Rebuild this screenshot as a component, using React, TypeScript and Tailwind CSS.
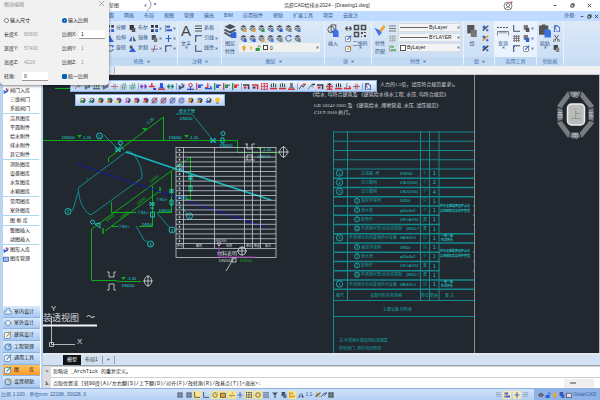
import { useState, type ReactNode } from "react";

type GlyphProps = { kind: string; a?: string; b?: string; className?: string };

const INK = "#4a5058";
const BLUE = "#2f62d8";

// small two-tone glyphs on a 10x10 grid
function Glyph({ kind, a = INK, b = BLUE, className = "size-2" }: GlyphProps) {
  const shapes: Record<string, ReactNode> = {
    layer: (
      <>
        <path d="M5 0 9 2 5 4 1 2Z" fill={a} />
        <path d="M1 4 5 6 9 4M1 6 5 8.500 9 6" stroke={a} strokeWidth="1.300" fill="none" />
        <rect x="5.500" y="6" width="4" height="4" fill={b} />
      </>
    ),
    copy: (
      <>
        <rect x="1" y="0" width="6" height="7" fill={a} />
        <rect x="4" y="4" width="5" height="6" fill={b} />
      </>
    ),
    mirror: (
      <>
        <path d="M4 1V9H0Z" fill={b} />
        <path d="M6 1V9H10Z" fill={a} />
      </>
    ),
    array: (
      <>
        <path d="M0 0H4V4H0ZM6 0H10V4H6ZM0 6H4V10H0Z" fill={a} />
        <path d="M6 6H10V10H6Z" fill={b} />
      </>
    ),
    align: (
      <>
        <path d="M0 0V10" stroke={a} strokeWidth="1.500" />
        <path d="M2 1H7V4H2ZM2 6H10V9H2Z" fill={b} />
      </>
    ),
    rotate: (
      <>
        <path d="M8 2A4 4 0 1 0 9 6" stroke={a} strokeWidth="1.400" fill="none" />
        <path d="M6 0 10 1 8 4Z" fill={b} />
      </>
    ),
    stretch: (
      <>
        <path d="M1 1H5V5H1Z" fill={a} />
        <path d="M0 10 5 3 10 10Z" fill={b} />
      </>
    ),
    corner: (
      <>
        <path d="M1 10V3Q1 1 3 1H10" stroke={a} strokeWidth="1.600" fill="none" />
        <circle cx="1.500" cy="1.500" r="1.500" fill={b} />
      </>
    ),
    trim: (
      <>
        <path d="M0 6H10" stroke={a} strokeWidth="1" />
        <path d="M3 10 6 0" stroke={b} strokeWidth="1.200" />
      </>
    ),
    arrows: <path d="M0 5 3 2V8ZM10 5 7 2V8ZM2 5H8" fill={a} stroke={a} />,
    plus: <path d="M5 0V10M1 5H9" stroke={b} strokeWidth="1.600" />,
    cross: (
      <>
        <path d="M0 5H10" stroke={a} strokeWidth="1.400" />
        <path d="M4 1V9M6 1V9" stroke={b} strokeWidth="1" />
      </>
    ),
    slash: (
      <>
        <path d="M0 4H10M0 7H10" stroke={a} />
        <path d="M3 10 5 0M6 10 8 0" stroke={b} />
      </>
    ),
    tee: (
      <>
        <path d="M4 0V6M0 5H8" stroke={a} strokeWidth="2" />
        <path d="M6 7H10V10H6Z" fill={b} />
      </>
    ),
    person: (
      <>
        <path d="M3 0H7V5L9 8H1L3 5Z" fill={b} />
        <path d="M0 9H10" stroke={a} strokeWidth="2" />
      </>
    ),
    stand: (
      <>
        <circle cx="5" cy="3" r="2.500" fill="none" stroke={a} strokeWidth="1.400" />
        <path d="M5 5V9M0 9H10" stroke={b} strokeWidth="1.800" />
      </>
    ),
    flag: (
      <>
        <path d="M1 0V10" stroke={a} strokeWidth="1.800" />
        <path d="M3 2H10V4H7V7H3Z" fill={b} />
      </>
    ),
    boat: (
      <>
        <path d="M4 0V6L0 7" stroke={b} strokeWidth="1.600" fill="none" />
        <path d="M0 8H10L7 4" stroke={a} strokeWidth="1.600" fill="none" />
      </>
    ),
    hook: (
      <>
        <path d="M0 3H8V9" stroke={a} strokeWidth="2.200" fill="none" />
        <path d="M1 5H5V8H1Z" fill={b} />
      </>
    ),
    dots: <path d="M1 0V10M5 0V10M9 0V10M0 1H10M0 5H10M0 9H10" stroke={a} strokeWidth="1.500" strokeDasharray="2 1" />,
    bars: (
      <>
        <path d="M2 1V6M5 0V6M8 1V6" stroke={b} strokeWidth="1.500" />
        <path d="M0 8H10" stroke={a} strokeWidth="2.200" />
      </>
    ),
    zig: (
      <>
        <path d="M0 9 4 3 6 6 9 1" stroke={b} strokeWidth="1.300" fill="none" />
        <path d="M5 2H10" stroke={a} strokeWidth="1.800" />
      </>
    ),
    stack: (
      <>
        <path d="M2 2H8M5 0V9" stroke={b} strokeWidth="1.800" />
        <path d="M0 5H10M1 9H9" stroke={a} strokeWidth="2" />
      </>
    ),
    brush: (
      <>
        <path d="M2 3Q5 -1 9 3Q10 6 7 9L4 7Z" fill="#3c485c" />
        <circle cx="5" cy="3.500" r="1.800" fill={b} />
        <path d="M5 5 2 8" stroke={a} strokeWidth="3" />
      </>
    ),
    strike: (
      <>
        <circle cx="5" cy="5" r="3.800" fill="#a9b4da" stroke="#4c5f9d" />
        <path d="M1 9 9 1" stroke={a} strokeWidth="1.600" />
      </>
    ),
    valve: (
      <>
        <path d="M1 3 5 5.500 9 1V6L5 8 1 10Z" fill={a} />
        <circle cx="6" cy="2" r="1.600" fill={b} />
      </>
    ),
    bulb: (
      <>
        <circle cx="5" cy="4" r="3.300" fill={b} />
        <path d="M3.500 7H6.500V10H3.500Z" fill={a} />
      </>
    ),
    lines: <path d="M0 1.500H10M0 5H10M0 8.500H10" stroke={a} strokeWidth="1.500" />,
    grid: <path d="M2 0V10M5 0V10M8 0V10M0 2H10M0 5H10M0 8H10" stroke={a} strokeWidth="1.100" />,
    ell: <path d="M1 0V9H10" stroke={a} strokeWidth="1.500" fill="none" />,
    check: (
      <>
        <path d="M1 1H5V5H1ZM6 6H9V9H6Z" fill={b} />
        <path d="M1 8 9 1" stroke={a} strokeWidth="2" />
      </>
    ),
    cut: (
      <>
        <path d="M2 0 7 7M8 0 3 7" stroke={a} strokeWidth="1.300" />
        <circle cx="2" cy="8" r="1.400" fill="none" stroke={a} />
        <circle cx="8" cy="8" r="1.400" fill="none" stroke={a} />
      </>
    ),
    ring: (
      <>
        <circle cx="5" cy="5" r="3.800" fill="none" stroke={a} strokeWidth="1.300" />
        <path d="M5 5 9 1" stroke={b} strokeWidth="1.500" />
      </>
    ),
    square: <rect x="1" y="2" width="8" height="7" fill={b} stroke={a} strokeWidth="1.300" />,
    funnel: <path d="M0 1H10L6 5V10H4V5Z" fill={a} />,
    clip: (
      <>
        <path d="M2 1H7V3H9V10H2Z" fill="#fff" stroke={b} strokeWidth="1.400" />
        <path d="M4 0V6L7 9" stroke={a} strokeWidth="1.200" fill="none" />
      </>
    ),
    lock: (
      <>
        <rect x="1" y="5" width="7" height="5" fill={b} />
        <path d="M5 5V2Q7 0 9 2V4" stroke={b} strokeWidth="1.300" fill="none" />
      </>
    ),
    house: <path d="M1 9V5H3V2H7V5H9V9Z" fill={b} stroke={a} strokeWidth="0.900" />,
    gate: (
      <>
        <circle cx="5" cy="5" r="3" fill={b} stroke={a} />
        <path d="M0 5H2M8 5H10" stroke={a} />
      </>
    ),
    pencil: (
      <>
        <rect x="0.500" y="2" width="7.500" height="7.500" rx="2" fill="#fff" stroke={a} />
        <path d="M3 7 9 1" stroke={b} strokeWidth="1.600" />
      </>
    ),
  };
  return (
    <svg viewBox="0 0 10 10" className={`shrink-0 ${className}`} aria-hidden="true">
      {shapes[kind]}
    </svg>
  );
}

function Caret() {
  return <span className="h-px w-px shrink-0 bg-[#5b7494] ring-1 ring-[#5b7494]/30" />;
}

function Panel({ title, className, more, children }: { title: string; className: string; more?: boolean; children: ReactNode }) {
  return (
    <section className={`flex h-11 shrink-0 flex-col border-r border-[#e9f2fc] ${className}`}>
      <div className="flex min-h-0 flex-1 items-start pt-0.5">{children}</div>
      <h2 className="flex h-2 items-center justify-center gap-1 bg-[#c1d9f3] text-[5px] leading-[8px] text-[#3e6aaa]">
        {title}
        {more && <Caret />}
      </h2>
    </section>
  );
}

function SmallTool({ kind, label, a, b, caret }: { kind: string; label?: string; a?: string; b?: string; caret?: boolean }) {
  return (
    <button className="flex h-2.5 items-center gap-0.5 whitespace-nowrap text-[5px]">
      <Glyph kind={kind} a={a} b={b} className="size-[7px]" />
      {label}
      {caret && <Caret />}
    </button>
  );
}

function BigTool({ icon, lines, caret }: { icon: ReactNode; lines: string[]; caret?: boolean }) {
  return (
    <button className="flex w-4 shrink-0 flex-col items-center text-[5px] leading-[8px] whitespace-nowrap">
      <span className="flex h-4 items-center">{icon}</span>
      {lines.map((l) => (
        <span key={l}>{l}</span>
      ))}
      {caret && <Caret />}
    </button>
  );
}

function PropSelect({ label, value, line }: { label: string; value: string; line: boolean }) {
  return (
    <label className="flex h-[9px] items-center gap-px border border-[#d5dde6] bg-[#f4f4f4] px-px">
      {line ? <span className="h-px w-7 bg-[#666]" /> : <span className="size-[6px] border border-[#555] bg-white" />}
      <select aria-label={label} className="min-w-0 flex-1 appearance-none bg-transparent text-[5px] leading-[7px] text-[#222]">
        <option>{value}</option>
      </select>
      <Caret />
    </label>
  );
}

const menus = ["曲面", "网格", "布局", "视图", "管理", "输出", "BIM", "应用软件", "帮助", "扩展工具", "项目", "云批注"];

function TitleBar() {
  return (
    <header className="relative flex h-[11px] shrink-0 items-center bg-white pl-[109px] text-[5px] text-[#333]">
      <span className="w-9">草图</span>
      <Caret />
      <svg viewBox="0 0 12 11" className="h-[11px] w-3" aria-hidden="true">
        <path d="M3 0Q8 5 1 11" stroke="#9a9a9a" fill="none" />
        <circle cx="9" cy="4" r="1" fill="#4a68b0" />
      </svg>
      <h1 className="flex-1 pl-[126px]">浩辰CAD给排水2024 - [Drawing1.dwg]</h1>
      <svg viewBox="0 0 10 10" className="mr-10 size-2.5" aria-hidden="true">
        <circle cx="5" cy="5" r="4" fill="none" stroke="#666" strokeWidth="0.800" />
        <circle cx="5" cy="4" r="1.600" fill="none" stroke="#666" strokeWidth="0.800" />
        <path d="M2 8Q5 4 8 8" fill="none" stroke="#666" strokeWidth="0.800" />
        <circle cx="8.500" cy="1.500" r="1" fill="#e33" />
      </svg>
      <WindowButtons className="gap-3 pr-2" />
    </header>
  );
}

function WindowButtons({ className }: { className: string }) {
  return (
    <div className={`flex items-center text-[#333] ${className}`}>
      {["M1 3H4", "M1 2H4V5H1ZM2 2V1H5V4H4", "M1 1 5 5M5 1 1 5"].map((d, i) => (
        <button key={d} aria-label={["最小化", "还原", "关闭"][i]}>
          <svg viewBox="0 0 6 6" className="size-[5px]">
            <path d={d} stroke="currentColor" fill="none" />
          </svg>
        </button>
      ))}
    </div>
  );
}

function Ribbon() {
  return (
    <div className="flex h-[45px] shrink-0 bg-gradient-to-b from-[#dce9f8] to-[#c7dcf3] pl-[105px] text-[#2d4f80]">
      <Panel title="修改" more className="w-[73px]">
        <div className="grid grid-cols-[22px_22px_14px_12px] pl-[2px]">
          <SmallTool kind="array" label="分解" />
          <SmallTool kind="copy" label="布尔" a="#333" b="#555" />
          <SmallTool kind="array" caret a="#333" />
          <SmallTool kind="align" caret />
          <SmallTool kind="stretch" label="拉伸" />
          <SmallTool kind="mirror" label="镜像" />
          <SmallTool kind="copy" caret b="#777" />
          <SmallTool kind="plus" caret />
          <SmallTool kind="rotate" label="旋转" />
          <SmallTool kind="stretch" label="复制" />
          <SmallTool kind="trim" caret b="#b04040" />
          <SmallTool kind="corner" caret />
        </div>
      </Panel>
      <Panel title="注释" more className="w-[44px]">
        <BigTool icon={<span className="font-['Liberation_Sans'] text-[15px] leading-4 text-[#444]">A</span>} lines={["文字"]} caret />
        <div className="flex flex-col pl-px">
          <SmallTool kind="lines" label="表格" />
          <SmallTool kind="corner" label="引线" caret />
          <SmallTool kind="ell" label="线性" caret />
        </div>
      </Panel>
      <Panel title="图层" more className="w-[103px]">
        <BigTool icon={<Glyph kind="layer" className="size-3.5" />} lines={["图层", "特性"]} />
        <div className="flex min-w-0 flex-1 flex-col pr-1 pl-px">
          <div className="grid w-[64px] grid-cols-7 pl-px">
            {["#e8a33a", "#e8a33a", "#35a04a", "#4a86d8", BLUE, "#888", "#4a86d8", BLUE, BLUE, "#e8a33a", "#4a86d8", "#888", BLUE, "#777"].map((c, i) => (
              <SmallTool key={i} kind={i === 12 ? "rotate" : "layer"} a="#555" b={c} />
            ))}
          </div>
          <label className="flex h-[9px] items-center gap-0.5 bg-[#f0f0ee] px-0.5">
            <Glyph kind="bulb" a="#e89a20" b="#f0ad3c" className="size-1.5" />
            <Glyph kind="bulb" a="#f0b040" b="#f3bb52" className="size-1" />
            <Glyph kind="lock" b="#2c9b3c" className="size-1.5" />
            <span className="size-[5px] border border-[#444] bg-white" />
            <select aria-label="图层" className="min-w-0 flex-1 appearance-none bg-transparent text-[5px] leading-[8px] text-[#222]">
              <option>0</option>
            </select>
            <Caret />
          </label>
        </div>
      </Panel>
      <Panel title="块" more className="w-[47px]">
        <BigTool
          icon={
            <svg viewBox="0 0 12 15" className="h-3.5 w-3" aria-hidden="true">
              <rect x="4" y="1" width="5" height="7" fill="none" stroke="#555" />
              <circle cx="4" cy="6" r="3.500" fill="none" stroke="#555" />
              <path d="M6 6H10L12 8V14H6Z" fill="#3a70e8" />
            </svg>
          }
          lines={["插入"]}
        />
        <div className="flex flex-col pl-1">
          <SmallTool kind="arrows" />
          <SmallTool kind="pencil" />
          <SmallTool kind="pencil" b="#e89a20" />
        </div>
        <BigTool
          icon={
            <svg viewBox="0 0 14 14" className="size-3.5" aria-hidden="true">
              <path d="M1.500 1.500H5.500V5.500H1.500ZM8.500 1.500H12.500V5.500H8.500ZM1.500 8.500H5.500V12.500H1.500Z" fill="none" stroke="#4d4d4d" strokeWidth="1.500" />
              <path d="M8 8H10V10H8ZM11 11H13V13H11ZM11 8H13V9H11ZM8 12H9V13H8Z" fill="#4d4d4d" />
            </svg>
          }
          lines={["二维码"]}
          caret
        />
      </Panel>
      <Panel title="特性" more className="w-[92px]">
        <BigTool
          icon={
            <svg viewBox="0 0 12 13" className="size-3" aria-hidden="true">
              <path d="M5 6 10 0 12 2 7 8Z" fill="#f0a030" />
              <path d="M0 3 4 5 8 8 5 12Z" fill="#3a70e8" />
            </svg>
          }
          lines={["特性", "匹配"]}
        />
        <div className="flex flex-col pl-px">
          <SmallTool kind="lines" a="#777" />
          <SmallTool kind="grid" a="#aaa" />
          <SmallTool kind="align" a="#d55" b="#5fae6a" />
        </div>
        <div className="flex min-w-0 flex-1 flex-col gap-px px-0.5">
          <PropSelect label="线宽" value="ByLayer" line />
          <PropSelect label="线型" value="BYLAYER" line />
          <PropSelect label="颜色" value="ByLayer" line={false} />
        </div>
      </Panel>
      <Panel title="组" more className="w-[31px]">
        <BigTool icon={<Glyph kind="copy" a="#555" b="#777" className="size-3" />} lines={["组"]} />
        <div className="flex flex-col pl-0.5">
          <SmallTool kind="check" a="#555" />
          <SmallTool kind="check" a="#e89a20" />
          <SmallTool kind="check" a="#333" />
        </div>
      </Panel>
      <Panel title="实用工具" className="w-[42px] bg-[#e9f2fd]">
        <BigTool
          icon={
            <svg viewBox="0 0 12 9" className="h-2.5 w-3" aria-hidden="true">
              <path d="M0 1H12" stroke="#555" strokeDasharray="2 1" />
              <path d="M0.500 9V5H11.500V9M3 5V7M5 5V7M7 5V7M9 5V7" fill="none" stroke="#666" strokeWidth="0.800" />
            </svg>
          }
          lines={["查询"]}
          caret
        />
        <div className="grid grid-cols-[10px_12px] pl-0.5">
          <SmallTool kind="ell" />
          <SmallTool kind="copy" a="#777" b="#555" caret />
          <SmallTool kind="grid" a="#666" />
          <SmallTool kind="copy" a="#777" caret />
          <SmallTool kind="corner" />
          <SmallTool kind="pencil" caret />
        </div>
      </Panel>
      <Panel title="剪贴板" className="w-[27px]">
        <BigTool
          icon={
            <svg viewBox="0 0 13 14" className="h-3.5 w-3" aria-hidden="true">
              <path d="M0 1H3V0H7V1H10V11H0Z" fill="#555" />
              <path d="M6 5H11L13 7V14H6Z" fill="#3a70e8" />
            </svg>
          }
          lines={["粘贴"]}
          caret
        />
        <div className="flex flex-col">
          <SmallTool kind="clip" />
          <SmallTool kind="cut" />
          <SmallTool kind="copy" a="#444" b="#888" />
        </div>
      </Panel>
    </div>
  );
}

const sideGroups = [
  ["阀门附件", "阀门入库", "三维阀门", "系统阀门"],
  ["洁具图库", "平面附件", "给水附件", "排水附件", "其它附件"],
  ["消防图库", "设备图库", "水泵图库", "水箱图库"],
  ["常用图库", "室外图库"],
  ["图 框 库"],
  ["整图插入", "动图插入"],
  ["图形入库", "图库管理"],
];

const sideTabs = [
  { label: "室内设计", kind: "house", b: "#dff0f4" },
  { label: "室外设计", kind: "gate", b: "#ffffff" },
  { label: "建筑设计", kind: "pencil", b: "#e08a2c" },
  { label: "工程管理", kind: "ring", b: "#6b8fb5" },
  { label: "通用工具", kind: "pencil", b: "#5a89c0" },
  { label: "图　　库", kind: "pencil", b: "#4d9a8c" },
  { label: "设置帮助", kind: "ring", b: "#e0a040" },
];

function Sidebar() {
  const [active, setActive] = useState("图　　库");
  const icons: Record<string, string> = { 阀门入库: "valve", 图形入库: "valve", 图库管理: "square" };
  return (
    <aside className="flex w-[43px] shrink-0 flex-col border-r-2 border-l-3 border-[#b9d3f1] bg-white text-[5px] text-[#222]">
      <nav className="flex-1 overflow-hidden pt-[2px]">
        {sideGroups.map((group, i) => (
          <ul key={i} className={i ? "mr-0.5 border-t border-[#a9d8f0]" : "mr-0.5"}>
            {group.map((name) => (
              <li key={name}>
                <button className="flex h-[9px] items-center whitespace-nowrap">
                  <span className="w-[7px]">
                    {icons[name] && <Glyph kind={icons[name]} a="#3560c0" b={name === "图库管理" ? "#9bc0ee" : "#c0306a"} className="size-1.5" />}
                  </span>
                  {name}
                </button>
              </li>
            ))}
          </ul>
        ))}
      </nav>
      <div className="flex h-[82px] flex-col pr-px">
        {sideTabs.map((t) => (
          <button
            key={t.label}
            onClick={() => setActive(t.label)}
            className={`flex flex-1 items-center gap-0.5 border-b border-[#90b4e0] pl-px whitespace-nowrap ${
              active === t.label ? "bg-gradient-to-b from-[#ffc25c] to-[#ff9a28]" : "bg-gradient-to-b from-[#d9eafc] to-[#a8c9f1]"
            }`}
          >
            <Glyph kind={t.kind} a="#4f7fa8" b={t.b} />
            {t.label}
          </button>
        ))}
      </div>
    </aside>
  );
}

type Tool = [kind: string, a: string, b: string];

const R = "#dc3038";
const K = "#3c3c44";
const pipeTools: Tool[][] = [
  [
    ["zig", "#999", "#888"],
    ["valve", "#6a7a98", "#2d9a3a"],
    ["bars", "#667", "#3a9a50"],
    ["valve", "#667088", "#8890b0"],
    ["cross", "#e06060", "#888"],
    ["slash", "#999", "#3a9a60"],
    ["slash", "#4aa070", "#4aa070"],
  ],
  [
    ["arrows", "#8040b0", K],
    ["tee", R, "#3040d0"],
    ["person", R, "#2850e0"],
    ["arrows", "#208070", K],
  ],
  [
    ["valve", "#4a5270", "#6a7ab0"],
    ["stand", R, "#3050c0"],
    ["flag", "#e04060", "#3050d0"],
    ["boat", "#3050d0", R],
    ["flag", "#209040", "#3050d0"],
    ["flag", R, "#308848"],
    ["flag", "#209040", R],
  ],
  [
    ["hook", K, R],
    ["hook", R, K],
    ["dots", R, K],
    ["bars", R, "#335533"],
    ["bars", R, "#335533"],
    ["person", R, "#777"],
  ],
  [
    ["zig", R, K],
    ["zig", K, "#777"],
    ["hook", K, R],
    ["stack", R, K],
    ["bars", R, K],
    ["boat", R, "#999"],
    ["cross", "#777", R],
  ],
  [["clip", K, "#3344b0"]],
];

const brushTools: Tool[] = [
  ["brush", "#2ca03a", "#f0f0c0"],
  ["brush", "#209060", "#d8f0e4"],
  ["brush", "#e88020", "#40b050"],
  ["brush", "#e88020", "#40b050"],
  ["brush", "#e8d020", "#d040c0"],
  ["brush", "#e060e0", "#f4d0f0"],
  ["brush", "#e88020", "#d040c0"],
  ["brush", "#e88020", "#d02090"],
  ["strike", R, R],
  ["strike", R, R],
  ["strike", "#6070b0", K],
  ["strike", "#8890d0", K],
  ["brush", "#e89020", "#f0b050"],
  ["brush", "#e89020", "#8898c8"],
  ["brush", "#3858b0", "#fff"],
  ["bulb", "#888", "#f6c52c"],
];

function ToolButton({ tool }: { tool: Tool }) {
  return (
    <button className="flex w-[9px] justify-center">
      <Glyph kind={tool[0]} a={tool[1]} b={tool[2]} className="size-[7px]" />
    </button>
  );
}

const WHITE = "#d8dadc";
const CYAN = "#18c4c4";
const TEAL = "#128a8e";
const GREEN = "#0fae14";

const partRows = [
  { no: "1", name: "过滤器, 阀", spec: "DN200", unit: "个", n: "1" },
  { no: "4", name: "法兰蝶阀", spec: "D7A-S(D600)", unit: "个", n: "2" },
  { no: "3", name: "法兰蝶阀", spec: "D7A-S(D600)", unit: "个", n: "4" },
  { sub: "4", name: "遥控浮球阀", spec: "DN50", unit: "只", n: "1" },
  { sub: "3", name: "泄水管", spec: "φ50x3x2", unit: "个", n: "1" },
  { sub: "2", name: "配管件", spec: "UXP-UA-FS/2", unit: "套", n: "1" },
  { sub: "10", name: "不锈钢水泵/全自动控制", spec: "QN80/2-7", unit: "套", n: "1" },
  { no: "2", name: "不锈钢全自动变频供水设备", spec: "WADE/30-3", unit: "只", n: "1" },
  { sub: "4", name: "遥控浮球阀", spec: "DN50", unit: "只", n: "1" },
  { sub: "3", name: "泄水管", spec: "φ50x3x2", unit: "个", n: "1" },
  { sub: "2", name: "配管件", spec: "UXP-UA-FS/2", unit: "套", n: "1" },
  { sub: "10", name: "不锈钢水泵/全自动控制", spec: "QN80/2-7", unit: "套", n: "1" },
  { no: "1", name: "不锈钢全自动变频供水设备", spec: "WADE/30-3", unit: "只", n: "1" },
];

function PartsSchedule() {
  const pitch = 9.25;
  return (
    <g fontSize="4">
      <g stroke={TEAL} fill="none">
        {Array.from({ length: 18 }, (_, i) => (
          <path key={i} d={`M333 ${132 + i * pitch}H474`} strokeWidth={i > 4 ? 1.5 : 1.2} />
        ))}
        <path d="M333 300.500H474M333 316.500H474M333.500 131V353M347.500 131V300M420.500 131V300M429.500 131V300M439 131V300" />
      </g>
      <rect x="440" y="198" width="33" height="35" fill="#212830" />
      <rect x="440" y="244" width="33" height="35" fill="#212830" />
      {partRows.map((r, i) => {
        const y = 175 + i * pitch;
        const wide = r.name.length > 9;
        return (
          <g key={i} fill={CYAN}>
            {r.no && <circle cx="339.500" cy={y - 2} r="3.200" fill="none" stroke={CYAN} strokeWidth="0.800" />}
            {r.no && <text x="338.500" y={y - 0.5}>{r.no}</text>}
            {r.sub && <circle cx="357" cy={y - 2} r="2.500" fill="none" stroke={CYAN} strokeWidth="0.800" />}
            {r.sub && <text x="357" y={y - 1} fontSize="3" textAnchor="middle">{r.sub}</text>}
            <text x={r.sub || !wide ? 361 : 349} y={y - 0.5} fill="#16a0a2">{r.name}</text>
            <text x={r.sub && wide ? 406 : 400} y={y - 0.5} fontSize={r.spec.length > 7 ? 3 : 4}>{r.spec}</text>
            <text x="423" y={y - 0.5} fill="#16a0a2">{r.unit}</text>
            <text x="433" y={y} fontSize="5">{r.n}</text>
          </g>
        );
      })}
      <g fill="#16a0a2">
        <text x="336" y="296.500">编号</text>
        <text x="370" y="296.500">设备材料名称规格</text>
        <text x="421" y="296.500">单位</text>
        <text x="430" y="296.500">数量</text>
        <text x="445" y="296.500">备 注</text>
        <text x="383" y="310.500">主要设备 材料表</text>
        <text x="339" y="341.500">注:不锈钢水箱选用标准图集</text>
        <text x="339" y="349.500">所有阀门, 管件均同管径</text>
      </g>
      <g fill="#20e8e8" fontSize="3">
        <text x="440" y="207">供水设备配套组件含水</text>
        <text x="440" y="212">泵控制柜及各附件管道</text>
        <text x="441" y="237">一用一备</text>
        <text x="441" y="241">生活供水</text>
        <text x="440" y="252">供水设备配套组件含水</text>
        <text x="440" y="257">泵控制柜及各附件管道</text>
        <text x="441" y="283">一用一备</text>
        <text x="441" y="287">生活供水</text>
      </g>
    </g>
  );
}

function Drawing() {
  return (
    <svg
      viewBox="43 75 557 279"
      className="absolute top-0 left-0 h-[279px] w-[557px] font-['Liberation_Sans','Noto_Sans_CJK_SC',sans-serif]"
      role="img"
      aria-label="给排水系统透视图"
    >
      {/* title block frame */}
      <path d="M474.500 75V354" stroke="#8a8f94" />

      {/* storage tank */}
      <g fill="none" stroke={TEAL} strokeWidth="1">
        <path d="M78 188 126 152Q131 150 135 156Q143 168 142 178L91 215Q84 212 80 200Z" />
        <path d="M104 135 118 149M71 210H73L78 192M136 226 144 240 148 242M157 213 170 228M176 200 187 214" />
        <path d="M176 114H192L212 139" />
      </g>

      {/* pipe runs */}
      <g fill="none" stroke={GREEN} strokeWidth="1">
        <path d="M55 88.500H70M43 140.500H237.500V152.500H279" />
        <path d="M108.500 162V158L163.500 117V140" />
        <path d="M91.500 280V229L190.500 157V199.500H181" />
        <path d="M91.500 280.500H115L120 281.500H141" />
        <path d="M105 231 161 190M111.500 202V212.500H136M157 212.500H171.500V172M112 226.500H118M139 226.500H152.500V186" />
        <path d="M103 228V234M160 187V193" strokeWidth="1.500" />
      </g>
      <path d="M126 152 170 167 271 200" stroke="#14b8be" strokeWidth="1.600" fill="none" />
      <path d="M77 164 170 195 265 227" stroke="#1a1a98" strokeWidth="1.300" fill="none" />

      {/* valves */}
      <g fill="none" stroke="#20dede" strokeWidth="0.800">
        <path d="M116 147V152L120 147V152ZM119 144 124 150M211 138V143L215 138V143ZM221 138V143H224V138ZM150 202V206L154 202V206ZM150.500 212H154.500V217H150.500ZM150 208H154M189 175V180L192 175V180ZM189 186H192V191H189ZM170 189V193L173 189V193ZM170 200H173V205H170ZM177 165H182V170ZM95 224 100 228V223Z" />
        <circle cx="120.500" cy="143" r="2" />
        <circle cx="223" cy="133.500" r="2" />
        <circle cx="92.500" cy="222" r="2" />
        <circle cx="99.500" cy="136" r="3" />
        <circle cx="68" cy="211.500" r="3" />
        <circle cx="150.500" cy="244" r="3" />
        <circle cx="172" cy="230" r="3" />
        <circle cx="189.500" cy="216" r="3" />
      </g>
      <g fill="#20dede" fontSize="4">
        <text x="98.500" y="137.500">5</text>
        <text x="67" y="213">2</text>
        <text x="149.500" y="245.500">3</text>
        <text x="171" y="231.500">4</text>
        <text x="188.500" y="217.500">1</text>
        <text x="62" y="138.500">DN200</text>
        <text x="82" y="138.500">-1.20</text>
        <text x="147" y="125" transform="rotate(-36 147 125)">-1.20</text>
        <text x="169" y="138.500">DN200</text>
        <text x="189" y="138.500">-1.20</text>
        <text x="179" y="113">给水干管</text>
        <text x="180" y="120">DN200</text>
        <text x="220" y="147">DN200</text>
        <text x="262" y="150.500">-1.00</text>
        <text x="258" y="157.500">DN100</text>
        <text x="127" y="279.500">-1.00</text>
        <text x="122" y="286.500">DN100</text>
        <text x="137" y="214">①S1×</text>
        <text x="118" y="228">①S1×</text>
        <text x="156" y="200.500">①S1×</text>
        <text x="142" y="225.500">DN50</text>
        <text x="159" y="211.500">DN100</text>
        <text x="178" y="198.500">DN50</text>
      </g>
      <g fill={GREEN} fontSize="4">
        <path d="M77 135H82L79.500 138ZM184 135H189L186.500 138ZM257 147H262L259.500 150ZM121 277H126L123.500 280ZM142 128H147L145 131Z" />
        <text x="151" y="183" transform="rotate(-36 151 183)">DN80</text>
        <text x="138" y="205" transform="rotate(-36 138 205)">DN80</text>
        <text x="121" y="219" transform="rotate(-36 121 219)">DN80</text>
        <text x="107" y="222" transform="rotate(-36 107 222)">DN80</text>
        <text x="86" y="181">T</text>
        <text x="240" y="262">DN100</text>
      </g>

      {/* blank materials table */}
      <g stroke="#c4c8cc" fill="none" strokeWidth="0.800">
        <rect x="176" y="147.500" width="100" height="110" />
        {Array.from({ length: 20 }, (_, i) => (
          <path key={i} d={`M176 ${152.3 + i * 4.8}H276`} />
        ))}
        <path d="M176 248.500H276M183.500 147V248M214.500 147V248M244.500 147V248M252.500 147V248M260.500 147V248" />
        <path d="M179.500 149V242" strokeWidth="1.500" strokeDasharray="2 2.800" />
      </g>
      <g fill={WHITE} fontSize="3">
        <text x="177" y="247">序号</text>
        <text x="196" y="247">图例</text>
        <text x="226" y="247">名称</text>
        <text x="246" y="247">单位</text>
        <text x="254" y="247">数量</text>
        <text x="265" y="247">备注</text>
        <text x="214" y="242" fontSize="4">DN100</text>
        <text x="217" y="255" fontSize="5">材料表明</text>
        <text x="219" y="262" fontSize="4">DN100</text>
      </g>
      <path d="M219 243V257H255" stroke="#a030b0" fill="none" />

      {/* breaks, flow marks and the ucs icon */}
      <g fill="none" stroke={WHITE} strokeWidth="0.800">
        <path d="M245 144H248M252 144H255M247 144V149H252V144M247 160V155H252V160M245 160H255M107 272H109V277H114V272H116M107 290H109V284H114V290H116M234 258 226 271M232 262H236V258H232ZM217 243H221L219 246Z" />
        <ellipse cx="283.500" cy="152" rx="3.800" ry="4.800" />
        <path d="M283.500 146V158M278 152H289" />
        <ellipse cx="148" cy="281" rx="3.500" ry="4.500" />
        <path d="M148 275V287M143 281H153" />
        <circle cx="242" cy="251" r="4" />
        <path d="M242 246V256M237 251H247" />
        <path d="M51.500 316V344.500H75M49.500 342.500H53.500V346.500H49.500Z" />
      </g>
      <path d="M43 325.500H97" stroke="#f4f4f4" strokeWidth="1.800" />
      <g fill={WHITE}>
        <text x="51" y="311" fontSize="8">Y</text>
        <text x="77" y="344" fontSize="8">X</text>
        <text x="43" y="321" fontSize="9">装透视图</text>
        <text x="86" y="320" fontSize="9">～</text>
      </g>
      <g fill={WHITE} fontSize="5" fontFamily="Liberation Serif, Noto Sans CJK SC, serif">
        <text x="380" y="86">人力的1.5倍，试压符合规范要求)。</text>
        <text x="310" y="96">《给水, 均符合建筑及 《建筑给水排水工程, 水压, 均符合规范》</text>
        <text x="314" y="106.500">GB 50242-2002 及 《建筑给水 ,埋地管道, 水压, 试压规范》</text>
        <text x="314" y="114">CJJ/T-2010 执行。</text>
      </g>
      <PartsSchedule />
    </svg>
  );
}

function Compass() {
  return (
    <svg viewBox="0 0 40 52" className="absolute top-[14px] right-[3px] h-[52px] w-10" aria-label="视图方位" role="img">
      <path d="M13 5H25L35 17V34L25 46H13L4 34V17Z" fill="none" stroke="#777b80" strokeWidth="5" />
      <path d="M12 0 15 9M26 0 23 9M0 18 8 20M40 18 31 20M0 33 8 31M40 33 31 31M12 52 15 43M26 52 23 43" stroke="#20272f" strokeWidth="1" />
      <rect x="11.500" y="15" width="17" height="21" rx="4" fill="#b9bcba" stroke="#eceeed" strokeWidth="1.500" />
      <g fill="#c4c7ca" fontSize="6" textAnchor="middle" fontFamily="Noto Sans CJK SC, sans-serif">
        <text x="19" y="8">北</text>
        <text x="19" y="49">南</text>
        <text x="4" y="28">西</text>
        <text x="35" y="28">东</text>
        <text x="20" y="30" fontSize="11" fill="#8d918f">上</text>
      </g>
    </svg>
  );
}

function Workspace() {
  return (
    <div className="relative min-h-0 flex-1 overflow-hidden border-r border-[#b0b8c0] bg-[#212830]">
      <Drawing />
      <Compass />
      <div className="absolute top-[5px] left-[27px] flex h-3 items-center gap-0.5 border border-[#8fb2e6] bg-gradient-to-b from-[#f2f7fe] to-[#b9d2f6] pr-1 pl-[3px]">
        {pipeTools.map((group, i) => (
          <div key={i} className={i ? "-ml-px flex border-l border-[#8ea9d4]" : "flex"}>
            {group.map((t, j) => (
              <ToolButton key={j} tool={t} />
            ))}
          </div>
        ))}
      </div>
      <div className="absolute top-[19px] left-8 flex h-3 items-center border border-[#8fb2e6] bg-gradient-to-b from-[#f2f7fe] to-[#b9d2f6] px-[2px]">
        {brushTools.map((t, i) => (
          <ToolButton key={i} tool={t} />
        ))}
      </div>
    </div>
  );
}

function CommandArea() {
  return (
    <>
      <div className="flex h-[13px] shrink-0 items-center border-t-2 border-b border-t-[#e4e8ec] border-b-[#9aa4b0] bg-[#d3e2f2] pl-5 text-[5px]">
        <button className="bg-[#101418] px-1 py-px text-white">模型</button>
        <button className="px-1 text-[#333]">布局1</button>
        <button className="border-x border-[#90a0b4] px-1 text-[#333]">+</button>
      </div>
      <div className="flex h-[22px] shrink-0 bg-[#d0d0d0] text-[5px] text-[#222]">
        <div className="flex w-2 flex-col items-center justify-around bg-[#dcdcdc]">
          <button aria-label="关闭命令行" className="leading-none text-[#555]">×</button>
          <Glyph kind="stretch" a="#777" b="#777" className="size-1" />
        </div>
        <div className="flex min-w-0 flex-1 flex-col gap-px pt-px font-['Liberation_Mono','Noto_Sans_CJK_SC',monospace]">
          <p className="flex-1 bg-white pl-0.5 leading-[10px]">忽略块 _ArchTick 的重复定义。</p>
          <div className="flex h-[10px] items-center bg-white">
            <input
              aria-label="命令行"
              className="h-[9px] min-w-0 flex-1 pl-0.5 outline-none"
              defaultValue="点取位置或 [转90度(A)/左右翻(S)/上下翻(D)/对齐(F)/改转角(R)/改基点(T)]<退出>:"
            />
            <span className="mr-1.5 flex h-[9px] w-[30px] items-center bg-[#efefef] pl-1.5">
              <span className="h-0.5 w-1.5 bg-[#999]" />
            </span>
          </div>
        </div>
      </div>
    </>
  );
}

const statusTools: { kind: string; on?: boolean }[] = [
  { kind: "grid" }, { kind: "grid" }, { kind: "ell", on: true }, { kind: "ell" }, { kind: "ring", on: true },
  { kind: "square", on: true }, { kind: "trim", on: true }, { kind: "plus" }, { kind: "dots", on: true }, { kind: "ring", on: true },
  { kind: "lines" }, { kind: "funnel" }, { kind: "copy" }, { kind: "align", on: true }, { kind: "mirror" },
];

function StatusBar() {
  return (
    <footer className="flex h-3 shrink-0 items-center border-t border-[#8fb0dc] bg-gradient-to-b from-[#cfe2fa] to-[#b4d0f3] text-[5px] text-[#3060a0]">
      <span className="w-[50px] pl-px whitespace-nowrap">比例 1:100 · 单位mm</span>
      <span className="w-[126px] whitespace-nowrap">22198, 30028, 0</span>
      <div className="flex w-[158px] items-center justify-between">
        {statusTools.map((t, i) => (
          <button key={i} className={t.on ? "rounded-[1px] bg-[#fbe48a] p-px" : "p-px"}>
            <Glyph kind={t.kind} a="#44506a" b={t.on ? "#e0a428" : "#5a6a88"} className="size-1.5" />
          </button>
        ))}
        <button>1:1·</button>
        <Glyph kind="check" a="#44506a" b="#e8b040" className="size-1.5" />
        <Glyph kind="zig" a="#44506a" b="#44506a" className="size-1.5" />
        <Glyph kind="grid" a="#333" className="size-1.5" />
      </div>
      <div className="ml-auto flex items-center gap-0.5 pr-1.5">
        <Glyph kind="lines" a="#8a9ab4" className="size-[5px]" />
        <span className="rounded-[1px] bg-[#fbe9a8] p-px"><Glyph kind="align" a="#d04040" className="size-1.5" /></span>
        <span className="rounded-[1px] bg-[#fbe9a8] p-px"><Glyph kind="plus" className="size-1.5" /></span>
        <Glyph kind="lines" a="#8a9ab4" className="size-[5px]" />
      </div>
      <div className="flex h-full shrink-0 items-center gap-px bg-[#8fb3e6] px-1">
        <Glyph kind="gate" a="#333" b="#777" className="size-1.5" />
        <Glyph kind="lock" className="size-1.5" />
        <Glyph kind="bulb" a="#e89a20" b="#f0a830" className="size-1.5" />
        <Glyph kind="copy" a="#3858b0" className="size-1.5" />
        <Glyph kind="square" a="#555" b="#dde" className="size-1.5" />
        <span>GstarCAD</span>
      </div>
    </footer>
  );
}

const axes = [
  { size: "长度X:", value: "80600", ratio: "比例X:" },
  { size: "宽度Y:", value: "57400", ratio: "比例Y:" },
  { size: "高度Z:", value: "4219", ratio: "比例Z:" },
];

const fieldClass = "h-[9px] w-full min-w-0 px-0.5 outline-none";

function BlockDialog() {
  const [mode, setMode] = useState("ratio");
  const [uniform, setUniform] = useState(true);
  return (
    <form className="absolute top-0 left-0 w-[109px] rounded-b-[4px] bg-[#f1f1f1] px-1 pb-1 text-[5px] leading-[9px] text-[#222] shadow-[0_1px_3px_rgba(0,0,0,0.500)]">
      <div className="flex h-4 items-start justify-between text-[#8a8a8a]">
        <span>图块编辑</span>
        <button type="button" aria-label="关闭" className="pr-px">
          <svg viewBox="0 0 5 5" className="mt-px size-[5px]">
            <path d="M0 0 5 5M5 0 0 5" stroke="#888" strokeWidth="0.700" />
          </svg>
        </button>
      </div>
      <div className="grid grid-cols-[18px_26px_14px_17px_26px] items-center gap-y-[5px]">
        <label className="col-span-3 flex items-center gap-px">
          <input type="radio" name="mode" checked={mode === "size"} onChange={() => setMode("size")} className="size-[5px] appearance-none rounded-full border border-[#777] bg-white checked:border-2 checked:border-[#0062bd]" />
          输入尺寸
        </label>
        <label className="col-span-2 flex items-center gap-px">
          <input type="radio" name="mode" checked={mode === "ratio"} onChange={() => setMode("ratio")} className="size-[5px] appearance-none rounded-full border border-[#777] bg-white checked:border-2 checked:border-[#0062bd]" />
          输入比例
        </label>
        {axes.map((axis, i) => (
          <div key={axis.size} className="contents">
            <label htmlFor={`size${i}`}>{axis.size}</label>
            <input id={`size${i}`} disabled defaultValue={axis.value} className={`${fieldClass} text-[#999]`} />
            <label htmlFor={`ratio${i}`} className="col-start-4">{axis.ratio}</label>
            <input id={`ratio${i}`} disabled={i > 0} defaultValue="1" className={`${fieldClass} ${i ? "text-[#999]" : "border-b border-[#999] bg-white"}`} />
          </div>
        ))}
        <label htmlFor="angle">转角:</label>
        <input id="angle" defaultValue="0" className={`${fieldClass} border-b border-[#999] bg-white`} />
        <label className="col-span-2 col-start-4 flex items-center gap-px">
          <input
            type="checkbox"
            checked={uniform}
            onChange={(e) => setUniform(e.target.checked)}
            className="size-[5px] appearance-none rounded-[1px] border border-[#777] bg-white checked:border-[#0062bd] checked:bg-[#0062bd]"
          />
          统一比例
        </label>
      </div>
    </form>
  );
}

export default function App() {
  return (
    <div className="relative flex h-screen w-full flex-col overflow-hidden bg-[#f0f0f0] font-['Liberation_Sans','Noto_Sans_CJK_SC',sans-serif]">
      <TitleBar />
      <nav className="flex h-2.5 shrink-0 items-center gap-2.5 bg-[#bfdbff] pl-[104px] text-[5px] text-[#2d558e]">
        {menus.map((m) => (
          <button key={m} className="whitespace-nowrap">{m}</button>
        ))}
        <button className="ml-auto whitespace-nowrap">外观·</button>
        <WindowButtons className="-ml-1.5 gap-0.5 pr-px" />
      </nav>
      <Ribbon />
      <div className="h-[9px] shrink-0 border-b border-[#c8c8c8] bg-[#f0f0f0]">
        <div className="h-2 w-[115px] rounded-r-[2px] border-r border-[#9bb8dc] bg-[#dce9f8]" />
      </div>
      <div className="flex min-h-0 flex-1">
        <Sidebar />
        <div className="flex min-w-0 flex-1 flex-col">
          <Workspace />
          <CommandArea />
        </div>
      </div>
      <StatusBar />
      <BlockDialog />
    </div>
  );
}
